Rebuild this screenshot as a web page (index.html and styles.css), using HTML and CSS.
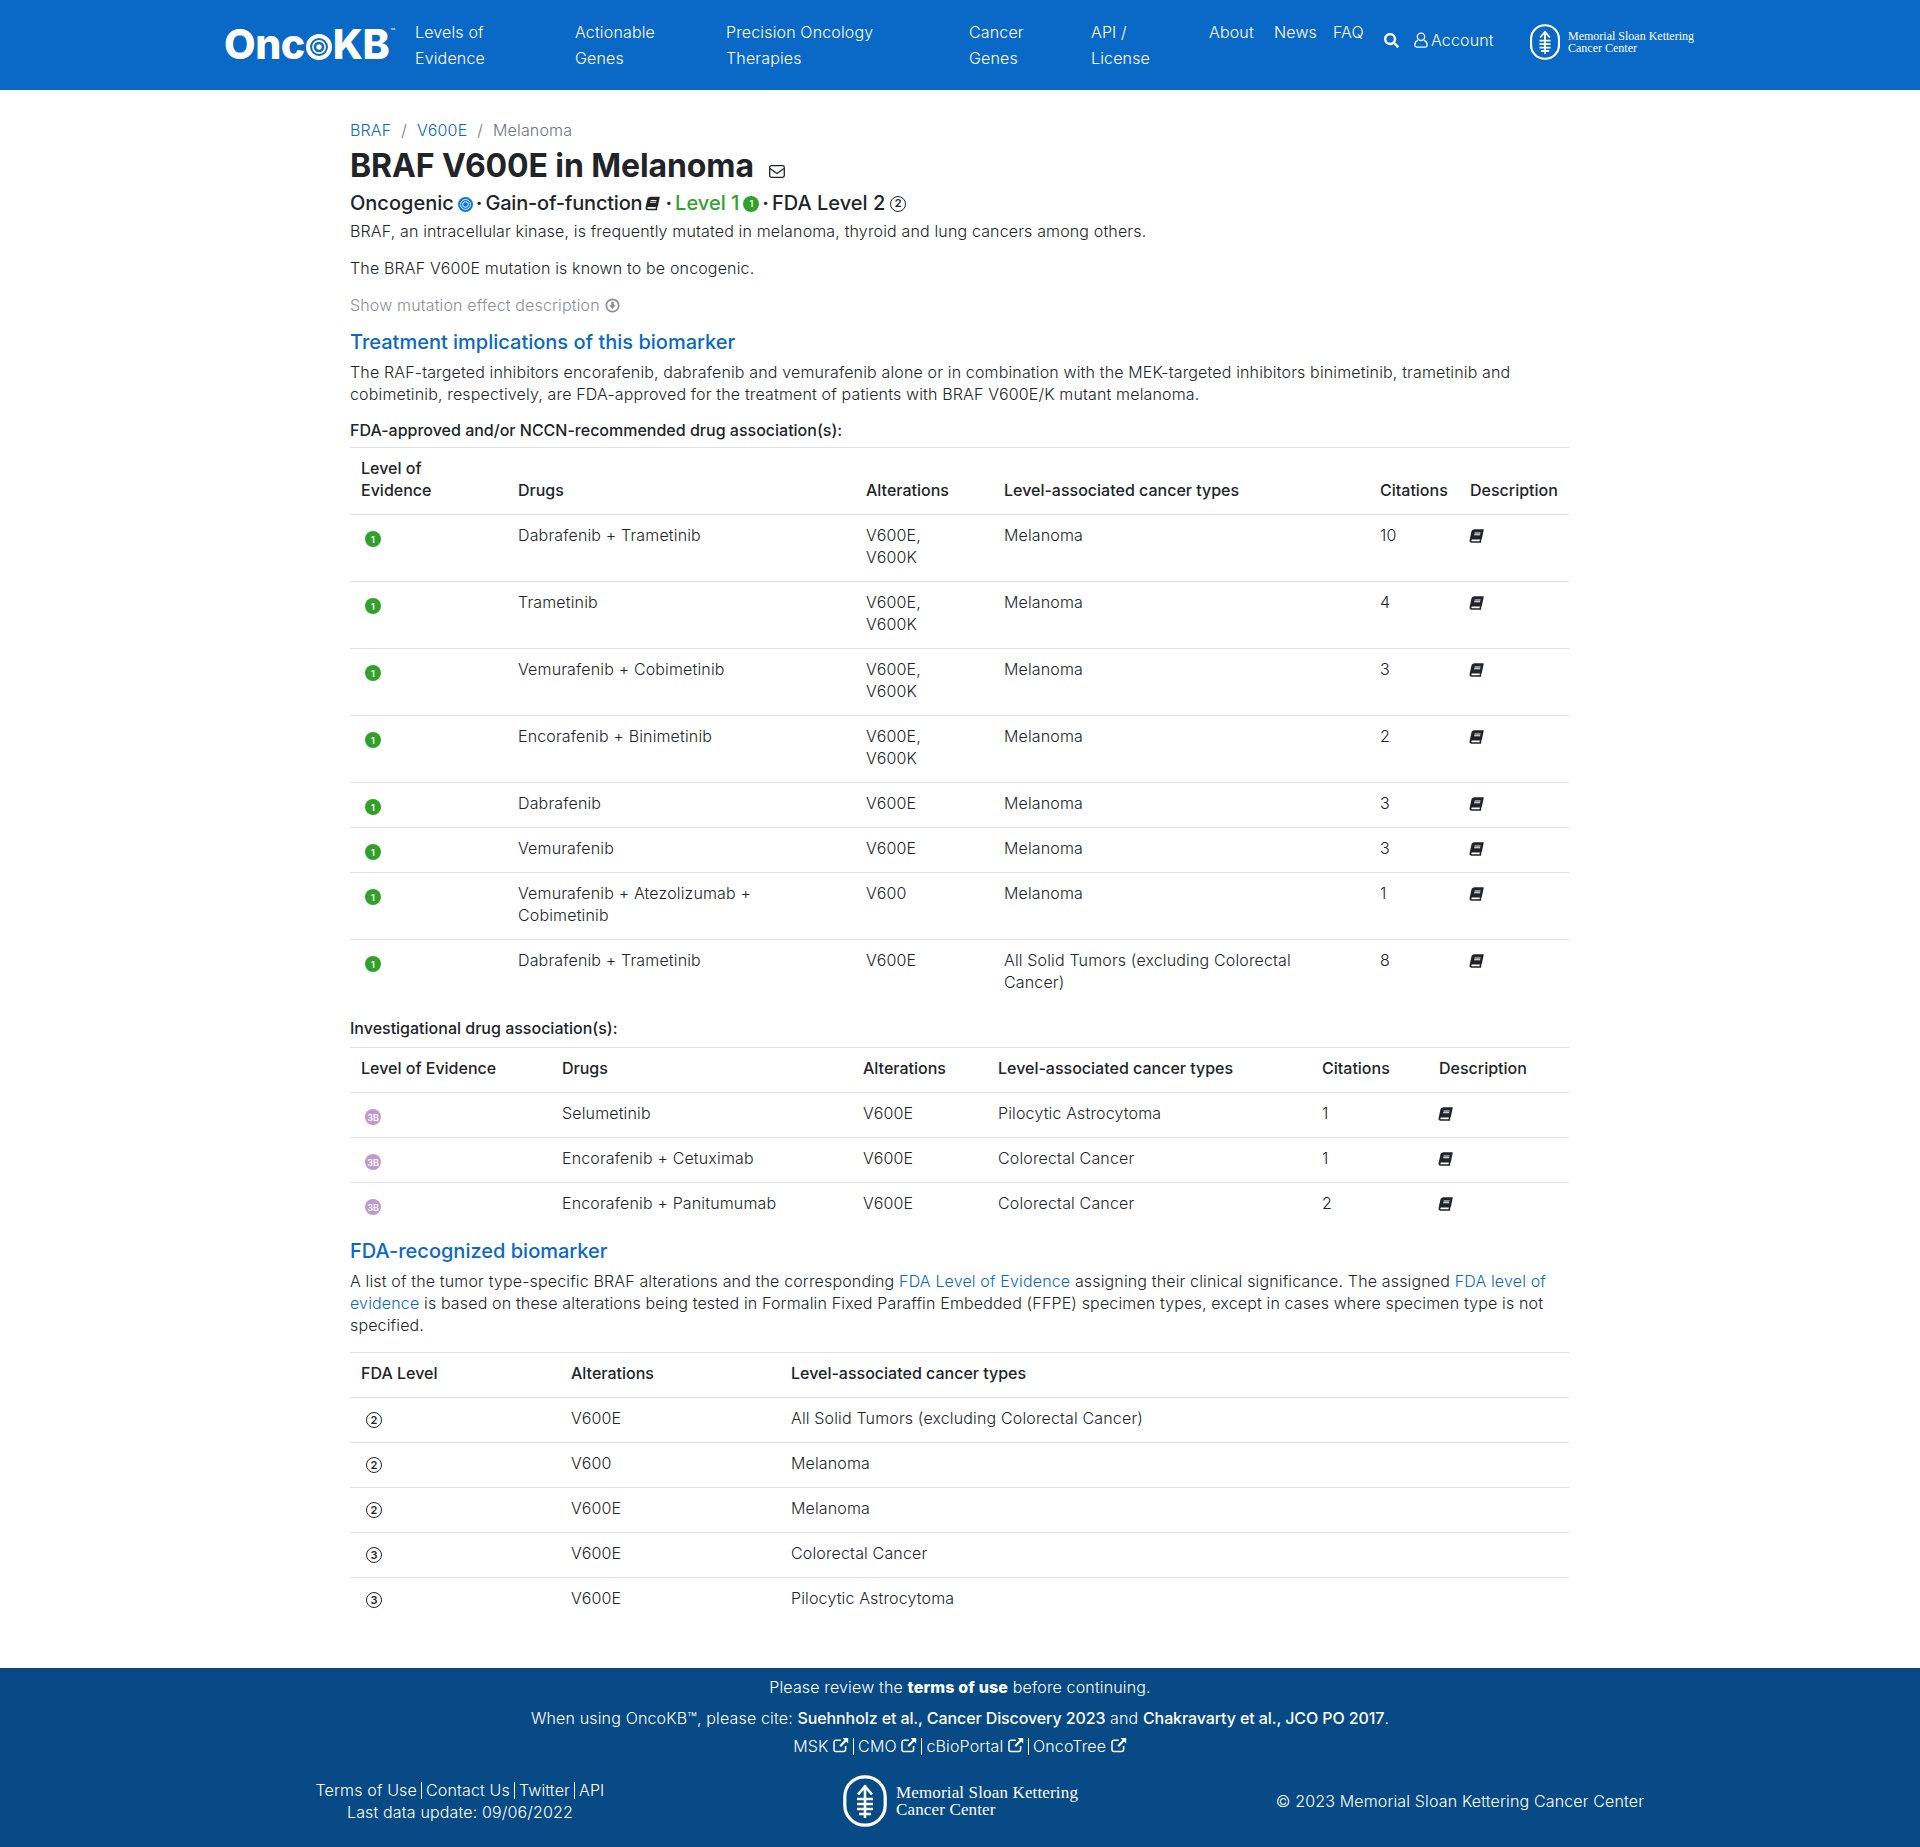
FILE: index.html
```html
<!DOCTYPE html>
<html lang="en">
<head>
<meta charset="utf-8">
<title>BRAF V600E in Melanoma | OncoKB</title>
<link rel="stylesheet" href="styles.css">
</head>
<body>
<svg class="defs" width="0" height="0" aria-hidden="true">
  <symbol id="book" viewBox="0 0 560 512"><path fill="currentColor" transform="translate(109 0) skewX(-12)" d="M448 360V24c0-13.3-10.7-24-24-24H96C43 0 0 43 0 96v320c0 53 43 96 96 96h328c13.3 0 24-10.7 24-24v-16c0-7.5-3.5-14.3-8.9-18.7-4.2-15.4-4.2-59.3 0-74.7 5.4-4.3 8.9-11.1 8.9-18.6zM128 134c0-3.3 2.7-6 6-6h212c3.3 0 6 2.7 6 6v20c0 3.3-2.7 6-6 6H134c-3.3 0-6-2.7-6-6v-20zm0 64c0-3.3 2.7-6 6-6h212c3.3 0 6 2.7 6 6v20c0 3.3-2.7 6-6 6H134c-3.3 0-6-2.7-6-6v-20zm253.4 250H96c-17.7 0-32-14.3-32-32 0-17.6 14.4-32 32-32h285.4c-1.9 17.1-1.9 46.9 0 64z"/></symbol>
  <symbol id="ext" viewBox="0 0 16 16"><path fill="none" stroke="currentColor" stroke-width="1.5" d="M12.6 9v3.6a2 2 0 0 1-2 2H3a2 2 0 0 1-2-2V5.2a2 2 0 0 1 2-2h4.8"/><path fill="currentColor" d="M9.6 1h5.6v5.6l-2-2-5.2 5.4-1.6-1.6 5.2-5.4z"/></symbol>
  <symbol id="msk" viewBox="0 0 44 52"><rect x="1.8" y="1.8" width="40.4" height="48.4" rx="20" fill="none" stroke="currentColor" stroke-width="3.2"/><path fill="none" stroke="currentColor" stroke-width="2.6" d="M22 10v33M15 19.5l7-8 7 8M14 24h16M14 29h16M14 34h16M16 39h12"/></symbol>
</svg>

<header class="topbar">
  <a class="logo">Onc<svg class="logo-o" viewBox="0 0 32 32"><circle cx="16" cy="16" r="13.5" fill="none" stroke="#fff" stroke-width="5"/><circle cx="16" cy="16" r="7.5" fill="none" stroke="#fff" stroke-width="2"/><circle cx="16" cy="16" r="3.4" fill="#fff"/></svg>KB<sup class="tm">™</sup></a>
  <nav class="nav">
    <a class="nav-item w-levels">Levels of<br>Evidence</a>
    <a class="nav-item w-genes">Actionable<br>Genes</a>
    <a class="nav-item w-therapies">Precision Oncology<br>Therapies</a>
    <a class="nav-item w-cancer">Cancer<br>Genes</a>
    <a class="nav-item w-api">API /<br>License</a>
    <a class="nav-item w-about">About</a>
    <a class="nav-item w-news">News</a>
    <a class="nav-item w-faq">FAQ</a>
    <a class="nav-tool w-search"><svg class="icon-search" viewBox="0 0 512 512"><path fill="currentColor" d="M505 442.7L405.3 343c-4.500-4.500-10.600-7-17-7H372c27.600-35.300 44-79.700 44-128C416 93.100 322.900 0 208 0S0 93.100 0 208s93.100 208 208 208c48.300 0 92.700-16.400 128-44v16.300c0 6.400 2.500 12.500 7 17l99.700 99.700c9.400 9.400 24.600 9.400 33.900 0l28.300-28.300c9.400-9.400 9.400-24.600.1-34zM208 336c-70.700 0-128-57.200-128-128 0-70.700 57.200-128 128-128 70.700 0 128 57.200 128 128 0 70.700-57.200 128-128 128z"/></svg></a>
    <a class="nav-tool w-account"><svg class="icon-user" viewBox="0 0 14 16"><circle cx="7" cy="4.800" r="3.700" fill="none" stroke="currentColor" stroke-width="1.300"/><path fill="none" stroke="currentColor" stroke-width="1.300" d="M3.800 8.300C2 9 .9 10.400.9 12.500v.6a2 2 0 0 0 2 2h8.200a2 2 0 0 0 2-2v-.6c0-2.100-1.100-3.500-2.900-4.200"/></svg>Account</a>
  </nav>
  <a class="msk msk-head"><svg class="msk-mark" viewBox="0 0 44 52"><use href="#msk"/></svg><span class="msk-name">Memorial Sloan Kettering<br>Cancer Center</span></a>
</header>

<main class="page">
  <div class="crumbs"><a class="link">BRAF</a><span class="sep">/</span><a class="link">V600E</a><span class="sep">/</span><span>Melanoma</span></div>
  <h1 class="title">BRAF V600E in Melanoma<svg class="icon-mail" viewBox="0 0 16 13"><rect x=".7" y=".7" width="14.600" height="11.600" rx="1.800" fill="none" stroke="currentColor" stroke-width="1.300"/><path fill="none" stroke="currentColor" stroke-width="1.300" d="M1 3.500l7 5 7-5"/></svg></h1>
  <div class="summary">
    <span>Oncogenic</span><svg class="icon-target" viewBox="0 0 16 16"><circle cx="8" cy="8" r="8" fill="#0a78e0"/><circle cx="8" cy="8" r="5.300" fill="none" stroke="#fff" stroke-width="1"/><circle cx="8" cy="8" r="3" fill="none" stroke="#fff" stroke-width="1"/></svg>
    <span class="dot">·</span><span class="tight">Gain-of-function</span><svg class="icon-book-sm"><use href="#book"/></svg>
    <span class="dot">·</span><span class="green">Level 1</span><span class="lvl lvl-1 lvl-inline">1</span>
    <span class="dot">·</span><span>FDA Level 2</span><span class="fda fda-inline">2</span>
  </div>
  <p class="para p-first">BRAF, an intracellular kinase, is frequently mutated in melanoma, thyroid and lung cancers among others.</p>
  <p class="para p-gap">The BRAF V600E mutation is known to be oncogenic.</p>
  <p class="para p-gap muted">Show mutation effect description <svg class="icon-down" viewBox="0 0 14 14"><circle cx="7" cy="7" r="5.800" fill="none" stroke="currentColor" stroke-width="1.600"/><path fill="currentColor" d="M5.800 3.500h2.400v3.300h1.700L7 10.300 4.100 6.800h1.700z"/></svg></p>
  <h2 class="section s-one">Treatment implications of this biomarker</h2>
  <p class="para p-sec">The RAF-targeted inhibitors encorafenib, dabrafenib and vemurafenib alone or in combination with the MEK-targeted inhibitors binimetinib, trametinib and<br>cobimetinib, respectively, are FDA-approved for the treatment of patients with BRAF V600E/K mutant melanoma.</p>
  <div class="label l-one">FDA-approved and/or NCCN-recommended drug association(s):</div>

  <table class="grid">
    <colgroup><col class="a1"><col class="a2"><col class="a3"><col class="a4"><col class="a5"><col class="a6"></colgroup>
    <thead><tr><th>Level of<br>Evidence</th><th>Drugs</th><th>Alterations</th><th>Level-associated cancer types</th><th>Citations</th><th>Description</th></tr></thead>
    <tbody>
      <tr><td><span class="lvl lvl-1">1</span></td><td>Dabrafenib + Trametinib</td><td>V600E,<br>V600K</td><td>Melanoma</td><td>10</td><td><svg class="icon-book"><use href="#book"/></svg></td></tr>
      <tr><td><span class="lvl lvl-1">1</span></td><td>Trametinib</td><td>V600E,<br>V600K</td><td>Melanoma</td><td>4</td><td><svg class="icon-book"><use href="#book"/></svg></td></tr>
      <tr><td><span class="lvl lvl-1">1</span></td><td>Vemurafenib + Cobimetinib</td><td>V600E,<br>V600K</td><td>Melanoma</td><td>3</td><td><svg class="icon-book"><use href="#book"/></svg></td></tr>
      <tr><td><span class="lvl lvl-1">1</span></td><td>Encorafenib + Binimetinib</td><td>V600E,<br>V600K</td><td>Melanoma</td><td>2</td><td><svg class="icon-book"><use href="#book"/></svg></td></tr>
      <tr><td><span class="lvl lvl-1">1</span></td><td>Dabrafenib</td><td>V600E</td><td>Melanoma</td><td>3</td><td><svg class="icon-book"><use href="#book"/></svg></td></tr>
      <tr><td><span class="lvl lvl-1">1</span></td><td>Vemurafenib</td><td>V600E</td><td>Melanoma</td><td>3</td><td><svg class="icon-book"><use href="#book"/></svg></td></tr>
      <tr><td><span class="lvl lvl-1">1</span></td><td>Vemurafenib + Atezolizumab +<br>Cobimetinib</td><td>V600</td><td>Melanoma</td><td>1</td><td><svg class="icon-book"><use href="#book"/></svg></td></tr>
      <tr><td><span class="lvl lvl-1">1</span></td><td>Dabrafenib + Trametinib</td><td>V600E</td><td>All Solid Tumors (excluding Colorectal<br>Cancer)</td><td>8</td><td><svg class="icon-book"><use href="#book"/></svg></td></tr>
    </tbody>
  </table>

  <div class="label l-two">Investigational drug association(s):</div>
  <table class="grid">
    <colgroup><col class="b1"><col class="b2"><col class="b3"><col class="b4"><col class="b5"><col class="b6"></colgroup>
    <thead><tr><th>Level of Evidence</th><th>Drugs</th><th>Alterations</th><th>Level-associated cancer types</th><th>Citations</th><th>Description</th></tr></thead>
    <tbody>
      <tr><td><span class="lvl lvl-3b">3B</span></td><td>Selumetinib</td><td>V600E</td><td>Pilocytic Astrocytoma</td><td>1</td><td><svg class="icon-book"><use href="#book"/></svg></td></tr>
      <tr><td><span class="lvl lvl-3b">3B</span></td><td>Encorafenib + Cetuximab</td><td>V600E</td><td>Colorectal Cancer</td><td>1</td><td><svg class="icon-book"><use href="#book"/></svg></td></tr>
      <tr><td><span class="lvl lvl-3b">3B</span></td><td>Encorafenib + Panitumumab</td><td>V600E</td><td>Colorectal Cancer</td><td>2</td><td><svg class="icon-book"><use href="#book"/></svg></td></tr>
    </tbody>
  </table>

  <h2 class="section s-two">FDA-recognized biomarker</h2>
  <p class="para p-sec">A list of the tumor type-specific BRAF alterations and the corresponding <a class="link">FDA Level of Evidence</a> assigning their clinical significance. The assigned <a class="link">FDA level of<br>evidence</a> is based on these alterations being tested in Formalin Fixed Paraffin Embedded (FFPE) specimen types, except in cases where specimen type is not<br>specified.</p>

  <table class="grid t-three">
    <colgroup><col class="c1"><col class="c2"><col class="c3"></colgroup>
    <thead><tr><th>FDA Level</th><th>Alterations</th><th>Level-associated cancer types</th></tr></thead>
    <tbody>
      <tr><td><span class="fda">2</span></td><td>V600E</td><td>All Solid Tumors (excluding Colorectal Cancer)</td></tr>
      <tr><td><span class="fda">2</span></td><td>V600</td><td>Melanoma</td></tr>
      <tr><td><span class="fda">2</span></td><td>V600E</td><td>Melanoma</td></tr>
      <tr><td><span class="fda">3</span></td><td>V600E</td><td>Colorectal Cancer</td></tr>
      <tr><td><span class="fda">3</span></td><td>V600E</td><td>Pilocytic Astrocytoma</td></tr>
    </tbody>
  </table>
</main>

<footer class="foot">
  <p class="f-line f-one">Please review the <b class="heavy">terms of use</b> before continuing.</p>
  <p class="f-line f-two">When using OncoKB™, please cite: <b>Suehnholz et al., Cancer Discovery 2023</b> and <b>Chakravarty et al., JCO PO 2017</b>.</p>
  <p class="f-line f-three">MSK <svg class="icon-ext"><use href="#ext"/></svg><span class="bar"></span>CMO <svg class="icon-ext"><use href="#ext"/></svg><span class="bar"></span>cBioPortal <svg class="icon-ext"><use href="#ext"/></svg><span class="bar"></span>OncoTree <svg class="icon-ext"><use href="#ext"/></svg></p>
  <div class="f-cols">
    <div class="f-col">
      <div>Terms of Use<span class="bar"></span>Contact Us<span class="bar"></span>Twitter<span class="bar"></span>API</div>
      <div>Last data update: 09/06/2022</div>
    </div>
    <div class="f-col"><a class="msk msk-foot"><svg class="msk-mark" viewBox="0 0 44 52"><use href="#msk"/></svg><span class="msk-name">Memorial Sloan Kettering<br>Cancer Center</span></a></div>
    <div class="f-col">© 2023 Memorial Sloan Kettering Cancer Center</div>
  </div>
</footer>
</body>
</html>
```

FILE: styles.css
```css
* { box-sizing: border-box; }
html, body { margin: 0; padding: 0; }
body {
  font-family: Inter, "Liberation Sans", sans-serif;
  font-size: 16px;
  font-weight: 300;
  letter-spacing: .15px;
  line-height: 22px;
  color: #212529;
  background: #fff;
}
.defs { position: absolute; }
a { color: inherit; text-decoration: none; }
p { margin: 0; }

.topbar {
  height: 90px;
  background: #0a68c6;
  color: #fff;
  display: flex;
  align-items: flex-start;
  padding-left: 224px;
}
.logo {
  width: 191px;
  height: 88px;
  display: flex;
  align-items: center;
  font-size: 41px;
  font-weight: 800;
  letter-spacing: -0.5px;
  line-height: 1;
}
.logo-o { width: 26px; height: 26px; margin: 6px 1px 0; }
.tm { font-size: 8px; font-weight: 400; letter-spacing: 0; align-self: flex-start; margin: 27px 0 0 1px; line-height: 1; }
.nav { display: flex; align-items: flex-start; }
.nav-item { display: block; padding-top: 19px; line-height: 26px; }
.nav-tool { display: flex; align-items: center; height: 53px; padding-top: 27px; line-height: 26px; }
.w-levels { width: 160px; }
.w-genes { width: 151px; }
.w-therapies { width: 243px; }
.w-cancer { width: 122px; }
.w-api { width: 118px; }
.w-about { width: 65px; }
.w-news { width: 59px; }
.w-faq { width: 51px; }
.w-search { width: 30px; }
.w-account { width: 115px; }
.icon-search { width: 15px; height: 15px; }
.icon-user { width: 14px; height: 16px; margin-right: 3px; }

.msk { display: flex; align-items: center; color: #fff; text-align: left; }
.msk-mark { display: block; flex: none; }
.msk-name { font-family: "Liberation Serif", serif; font-weight: 400; letter-spacing: 0; }
.msk-head { padding-top: 24px; gap: 7px; }
.msk-head .msk-mark { width: 32px; height: 36px; }
.msk-head .msk-name { font-size: 12px; line-height: 12px; }
.msk-foot { gap: 8px; justify-content: center; }
.msk-foot .msk-mark { width: 46px; height: 52px; }
.msk-foot .msk-name { font-size: 17px; line-height: 17px; letter-spacing: .15px; }

.page { width: 1219px; margin: 0 0 0 350px; padding: 29px 0 46px; }
.crumbs { color: #6c757d; }
.sep { margin: 0 10px; }
.link { color: #0a68c6; }
.title { margin: 6px 0 0; font-size: 32px; line-height: 38px; font-weight: 700; letter-spacing: -0.1px; }
.icon-mail { width: 16px; height: 13px; margin-left: 15px; vertical-align: -1px; }
.summary { display: flex; align-items: center; margin-top: 4px; height: 28px; font-size: 20px; font-weight: 500; letter-spacing: 0; }
.tight { letter-spacing: -.2px; }
.icon-target { width: 15px; height: 15px; margin: 2px 0 0 4px; }
.icon-book-sm { width: 15px; height: 15px; margin: 0 2px 0 3px; color: #212529; }
.dot { margin: 0 3px 0 3px; font-weight: 700; }
.green { color: #33a02c; }
.lvl {
  display: inline-flex;
  width: 16px;
  height: 16px;
  margin: 7px 0 -7px 4px;
  border-radius: 50%;
  align-items: center;
  justify-content: center;
  color: #fff;
  font-size: 9px;
  line-height: 1;
  font-weight: 600;
  letter-spacing: 0;
  vertical-align: top;
}
.lvl-1 { background: #33a02c; }
.lvl-3b { background: #be98ce; }
.lvl-inline { margin: 1px 0 0 4px; }
.fda {
  display: inline-flex;
  width: 16px;
  height: 16px;
  margin: 5px 0 -5px 5px;
  border: 1.5px solid #212529;
  border-radius: 50%;
  align-items: center;
  justify-content: center;
  font-size: 11px;
  line-height: 1;
  font-weight: 600;
  letter-spacing: 0;
  vertical-align: top;
}
.fda-inline { margin: 1px 0 0 5px; }
.p-first { margin-top: 3px; }
.p-gap { margin-top: 15px; }
.muted { color: #8a8f94; }
.icon-down { width: 15px; height: 15px; margin-left: 1px; vertical-align: -2px; }
.section { margin: 0; font-size: 20px; line-height: 24px; font-weight: 500; letter-spacing: 0; color: #0a68c6; }
.s-one { margin-top: 14px; }
.s-two { margin-top: 12px; }
.p-sec { margin-top: 7px; }
.label { font-weight: 500; letter-spacing: 0; }
.l-one { margin-top: 14px; margin-bottom: 6px; }
.l-two { margin-top: 11px; margin-bottom: 8px; }

.grid { width: 100%; table-layout: fixed; border-collapse: collapse; border-top: 1px solid #dee2e6; }
.t-three { margin-top: 16px; }
.grid th { padding: 9px 11px 13px; text-align: left; vertical-align: bottom; font-weight: 500; letter-spacing: 0; border-bottom: 1px solid #dee2e6; }
.grid td { padding: 9px 11px 13px; vertical-align: top; border-bottom: 1px solid #dee2e6; }
.grid tbody tr:last-child td { border-bottom: 0; }
.icon-book { display: block; width: 15px; height: 14px; margin: 5px 0 0 -1px; color: #212529; }
.a1 { width: 157px; } .a2 { width: 348px; } .a3 { width: 138px; } .a4 { width: 376px; } .a5 { width: 90px; } .a6 { width: 110px; }
.b1 { width: 201px; } .b2 { width: 301px; } .b3 { width: 135px; } .b4 { width: 324px; } .b5 { width: 117px; } .b6 { width: 141px; }
.c1 { width: 210px; } .c2 { width: 220px; } .c3 { width: 789px; }

.foot { height: 180px; background: #074a86; color: #fff; text-align: center; padding-top: 8px; }
.f-line b { font-weight: 500; letter-spacing: -.1px; }
.f-line .heavy { font-weight: 800; letter-spacing: .15px; }
.f-two { margin-top: 9px; }
.f-three { margin-top: 6px; }
.icon-ext { width: 16px; height: 16px; vertical-align: -1px; color: #fff; }
.bar { display: inline-block; width: 1px; height: 17px; background: #fff; margin: 0 4px; vertical-align: -3px; }
.f-cols { display: grid; grid-template-columns: repeat(3, 500px); justify-content: center; align-items: center; margin-top: 18px; }
```
